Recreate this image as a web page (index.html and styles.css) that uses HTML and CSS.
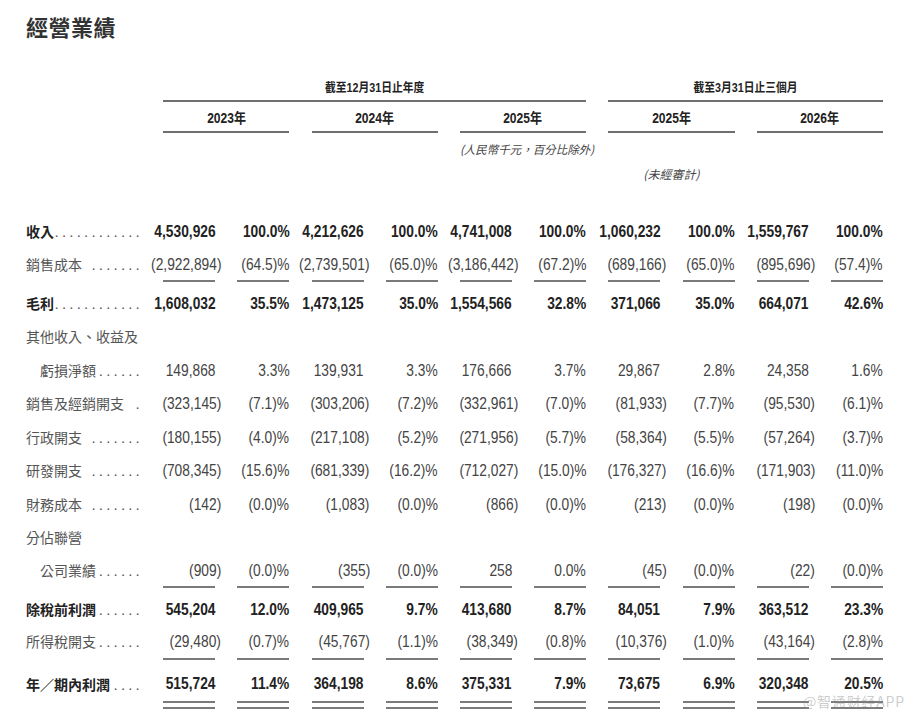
FILE: index.html
```html
<!DOCTYPE html>
<html lang="zh-Hant">
<head>
<meta charset="utf-8">
<title>經營業績</title>
<link rel="stylesheet" href="styles.css">
</head>
<body>
<div class="page">
  <h1 class="title">經營業績</h1>

  <div class="head">
    <div class="row hrow-a">
      <div class="lab"></div>
      <div class="h span6"><span class="hn">截至12月31日止年度</span></div>
      <div class="h span4"><span class="hn">截至3月31日止三個月</span></div>
    </div>
    <div class="row hrow-b">
      <div class="lab"></div>
      <div class="h span2"><span class="hn">2023年</span></div>
      <div class="h span2"><span class="hn">2024年</span></div>
      <div class="h span2"><span class="hn">2025年</span></div>
      <div class="h span2"><span class="hn">2025年</span></div>
      <div class="h span2"><span class="hn">2026年</span></div>
    </div>
    <div class="row hrow-c">
      <div class="lab"></div>
      <div class="note g3">(人民幣千元，百分比除外)</div>
    </div>
    <div class="row hrow-d">
      <div class="lab"></div>
      <div class="note g4">(未經審計)</div>
    </div>
  </div>

  <div class="body">
    <div class="row b">
      <div class="lab"><span class="t">收入</span><span class="dots"></span></div>
      <div class="v"><span class="n">4,530,926</span></div><div class="v"><span class="n">100.0%</span></div>
      <div class="v"><span class="n">4,212,626</span></div><div class="v"><span class="n">100.0%</span></div>
      <div class="v"><span class="n">4,741,008</span></div><div class="v"><span class="n">100.0%</span></div>
      <div class="v"><span class="n">1,060,232</span></div><div class="v"><span class="n">100.0%</span></div>
      <div class="v"><span class="n">1,559,767</span></div><div class="v"><span class="n">100.0%</span></div>
    </div>
    <div class="row ul">
      <div class="lab"><span class="t">銷售成本</span><span class="dots sp"></span></div>
      <div class="v"><span class="n">(2,922,894<span class="hang">)</span></span></div><div class="v"><span class="n">(64.5)%</span></div>
      <div class="v"><span class="n">(2,739,501<span class="hang">)</span></span></div><div class="v"><span class="n">(65.0)%</span></div>
      <div class="v"><span class="n">(3,186,442<span class="hang">)</span></span></div><div class="v"><span class="n">(67.2)%</span></div>
      <div class="v"><span class="n">(689,166<span class="hang">)</span></span></div><div class="v"><span class="n">(65.0)%</span></div>
      <div class="v"><span class="n">(895,696<span class="hang">)</span></span></div><div class="v"><span class="n">(57.4)%</span></div>
    </div>
    <div class="row b">
      <div class="lab"><span class="t">毛利</span><span class="dots"></span></div>
      <div class="v"><span class="n">1,608,032</span></div><div class="v"><span class="n">35.5%</span></div>
      <div class="v"><span class="n">1,473,125</span></div><div class="v"><span class="n">35.0%</span></div>
      <div class="v"><span class="n">1,554,566</span></div><div class="v"><span class="n">32.8%</span></div>
      <div class="v"><span class="n">371,066</span></div><div class="v"><span class="n">35.0%</span></div>
      <div class="v"><span class="n">664,071</span></div><div class="v"><span class="n">42.6%</span></div>
    </div>
    <div class="row">
      <div class="lab"><span class="t">其他收入、收益及</span></div>
    </div>
    <div class="row">
      <div class="lab ind"><span class="t">虧損淨額</span><span class="dots"></span></div>
      <div class="v"><span class="n">149,868</span></div><div class="v"><span class="n">3.3%</span></div>
      <div class="v"><span class="n">139,931</span></div><div class="v"><span class="n">3.3%</span></div>
      <div class="v"><span class="n">176,666</span></div><div class="v"><span class="n">3.7%</span></div>
      <div class="v"><span class="n">29,867</span></div><div class="v"><span class="n">2.8%</span></div>
      <div class="v"><span class="n">24,358</span></div><div class="v"><span class="n">1.6%</span></div>
    </div>
    <div class="row">
      <div class="lab"><span class="t">銷售及經銷開支</span><span class="dots sp"></span></div>
      <div class="v"><span class="n">(323,145<span class="hang">)</span></span></div><div class="v"><span class="n">(7.1)%</span></div>
      <div class="v"><span class="n">(303,206<span class="hang">)</span></span></div><div class="v"><span class="n">(7.2)%</span></div>
      <div class="v"><span class="n">(332,961<span class="hang">)</span></span></div><div class="v"><span class="n">(7.0)%</span></div>
      <div class="v"><span class="n">(81,933<span class="hang">)</span></span></div><div class="v"><span class="n">(7.7)%</span></div>
      <div class="v"><span class="n">(95,530<span class="hang">)</span></span></div><div class="v"><span class="n">(6.1)%</span></div>
    </div>
    <div class="row">
      <div class="lab"><span class="t">行政開支</span><span class="dots sp"></span></div>
      <div class="v"><span class="n">(180,155<span class="hang">)</span></span></div><div class="v"><span class="n">(4.0)%</span></div>
      <div class="v"><span class="n">(217,108<span class="hang">)</span></span></div><div class="v"><span class="n">(5.2)%</span></div>
      <div class="v"><span class="n">(271,956<span class="hang">)</span></span></div><div class="v"><span class="n">(5.7)%</span></div>
      <div class="v"><span class="n">(58,364<span class="hang">)</span></span></div><div class="v"><span class="n">(5.5)%</span></div>
      <div class="v"><span class="n">(57,264<span class="hang">)</span></span></div><div class="v"><span class="n">(3.7)%</span></div>
    </div>
    <div class="row">
      <div class="lab"><span class="t">研發開支</span><span class="dots sp"></span></div>
      <div class="v"><span class="n">(708,345<span class="hang">)</span></span></div><div class="v"><span class="n">(15.6)%</span></div>
      <div class="v"><span class="n">(681,339<span class="hang">)</span></span></div><div class="v"><span class="n">(16.2)%</span></div>
      <div class="v"><span class="n">(712,027<span class="hang">)</span></span></div><div class="v"><span class="n">(15.0)%</span></div>
      <div class="v"><span class="n">(176,327<span class="hang">)</span></span></div><div class="v"><span class="n">(16.6)%</span></div>
      <div class="v"><span class="n">(171,903<span class="hang">)</span></span></div><div class="v"><span class="n">(11.0)%</span></div>
    </div>
    <div class="row">
      <div class="lab"><span class="t">財務成本</span><span class="dots sp"></span></div>
      <div class="v"><span class="n">(142<span class="hang">)</span></span></div><div class="v"><span class="n">(0.0)%</span></div>
      <div class="v"><span class="n">(1,083<span class="hang">)</span></span></div><div class="v"><span class="n">(0.0)%</span></div>
      <div class="v"><span class="n">(866<span class="hang">)</span></span></div><div class="v"><span class="n">(0.0)%</span></div>
      <div class="v"><span class="n">(213<span class="hang">)</span></span></div><div class="v"><span class="n">(0.0)%</span></div>
      <div class="v"><span class="n">(198<span class="hang">)</span></span></div><div class="v"><span class="n">(0.0)%</span></div>
    </div>
    <div class="row">
      <div class="lab"><span class="t">分佔聯營</span></div>
    </div>
    <div class="row ul">
      <div class="lab ind"><span class="t">公司業績</span><span class="dots"></span></div>
      <div class="v"><span class="n">(909<span class="hang">)</span></span></div><div class="v"><span class="n">(0.0)%</span></div>
      <div class="v"><span class="n">(355<span class="hang">)</span></span></div><div class="v"><span class="n">(0.0)%</span></div>
      <div class="v"><span class="n">258</span></div><div class="v"><span class="n">0.0%</span></div>
      <div class="v"><span class="n">(45<span class="hang">)</span></span></div><div class="v"><span class="n">(0.0)%</span></div>
      <div class="v"><span class="n">(22<span class="hang">)</span></span></div><div class="v"><span class="n">(0.0)%</span></div>
    </div>
    <div class="row b">
      <div class="lab"><span class="t">除稅前利潤</span><span class="dots"></span></div>
      <div class="v"><span class="n">545,204</span></div><div class="v"><span class="n">12.0%</span></div>
      <div class="v"><span class="n">409,965</span></div><div class="v"><span class="n">9.7%</span></div>
      <div class="v"><span class="n">413,680</span></div><div class="v"><span class="n">8.7%</span></div>
      <div class="v"><span class="n">84,051</span></div><div class="v"><span class="n">7.9%</span></div>
      <div class="v"><span class="n">363,512</span></div><div class="v"><span class="n">23.3%</span></div>
    </div>
    <div class="row ul">
      <div class="lab"><span class="t">所得稅開支</span><span class="dots"></span></div>
      <div class="v"><span class="n">(29,480<span class="hang">)</span></span></div><div class="v"><span class="n">(0.7)%</span></div>
      <div class="v"><span class="n">(45,767<span class="hang">)</span></span></div><div class="v"><span class="n">(1.1)%</span></div>
      <div class="v"><span class="n">(38,349<span class="hang">)</span></span></div><div class="v"><span class="n">(0.8)%</span></div>
      <div class="v"><span class="n">(10,376<span class="hang">)</span></span></div><div class="v"><span class="n">(1.0)%</span></div>
      <div class="v"><span class="n">(43,164<span class="hang">)</span></span></div><div class="v"><span class="n">(2.8)%</span></div>
    </div>
    <div class="row b dbl">
      <div class="lab"><span class="t">年／期內利潤</span><span class="dots"></span></div>
      <div class="v"><span class="n">515,724</span></div><div class="v"><span class="n">11.4%</span></div>
      <div class="v"><span class="n">364,198</span></div><div class="v"><span class="n">8.6%</span></div>
      <div class="v"><span class="n">375,331</span></div><div class="v"><span class="n">7.9%</span></div>
      <div class="v"><span class="n">73,675</span></div><div class="v"><span class="n">6.9%</span></div>
      <div class="v"><span class="n">320,348</span></div><div class="v"><span class="n">20.5%</span></div>
    </div>
  </div>

  <div class="watermark">@智通财经APP</div>
</div>
</body>
</html>
```

FILE: styles.css
```css
html, body {
  margin: 0;
  padding: 0;
  background: #ffffff;
}

.page {
  position: relative;
  width: 917px;
  height: 720px;
  overflow: hidden;
  font-family: "Liberation Sans", "Noto Sans CJK TC", sans-serif;
  color: #444;
}

.title {
  margin: 0;
  padding: 13px 0 0 26px;
  font-family: "Noto Sans CJK TC", sans-serif;
  font-size: 22px;
  line-height: 26px;
  font-weight: 700;
  letter-spacing: 0.5px;
  color: #333;
}

.row {
  display: grid;
  grid-template-columns: 115px repeat(10, 52px);
  column-gap: 22.2px;
  padding-left: 26px;
  line-height: 33.5px;
}

/* header */
.head {
  margin-top: 38px;
}

.h {
  text-align: center;
  font-family: "Liberation Sans", "Noto Sans CJK TC", sans-serif;
  font-weight: 700;
  color: #222;
  white-space: nowrap;
}
.hn {
  display: inline-block;
  transform: scaleX(0.86);
  transform-origin: center;
}

.span6 { grid-column: span 6; }
.span4 { grid-column: span 4; }
.span2 { grid-column: span 2; }

.hrow-a {
  line-height: 23px;
  font-size: 12.5px;
}
.hrow-a .h {
  border-bottom: 2px solid #6f6f6f;
}

.hrow-b {
  line-height: 25px;
  font-size: 14px;
}
.hrow-b .h {
  padding-top: 4px;
  border-bottom: 2px solid #6f6f6f;
}

.note {
  font-family: "Noto Sans CJK TC", sans-serif;
  font-style: italic;
  color: #444;
  white-space: nowrap;
}

.hrow-c {
  line-height: 32px;
  font-size: 11.5px;
}
.note.g3 {
  grid-column: 6 / span 2;
  text-align: right;
  margin-right: -3px;
}

.hrow-d {
  line-height: 18px;
  font-size: 12px;
}
.note.g4 {
  grid-column: 8 / span 2;
  text-align: center;
}

/* body */
.body {
  margin-top: 32px;
}

.lab {
  display: flex;
  align-items: baseline;
  font-family: "Noto Sans CJK TC", sans-serif;
  font-size: 14px;
  color: #555;
  white-space: nowrap;
  min-width: 0;
}
.lab.ind {
  padding-left: 14px;
}
.lab .t {
  flex: none;
}
.lab .dots {
  flex: 1;
  overflow: hidden;
  direction: rtl;
  margin-right: -2px;
  font-family: "Liberation Sans", sans-serif;
  font-size: 15px;
  font-weight: 400;
  letter-spacing: 3.2px;
  color: #555;
}
.lab .dots.sp {
  margin-left: 8px;
}
.lab .dots::after {
  content: "......................";
}

.v {
  display: flex;
  justify-content: flex-end;
  font-size: 17px;
  white-space: nowrap;
  color: #444;
}
.v .n {
  flex: none;
  display: inline-block;
  transform: scaleX(0.81);
  transform-origin: right center;
}
.hang {
  margin-right: -0.45em;
}

.row.b .v,
.row.b .lab .t {
  font-weight: 700;
  color: #222;
}

.row.ul {
  line-height: 31.5px;
  padding-bottom: 4.5px;
}
.row.ul .v {
  border-bottom: 2px solid #7a7a7a;
}

.row.dbl {
  line-height: 34px;
  padding-top: 3px;
}
.row.dbl .v {
  border-bottom: 2px solid #7a7a7a;
  box-shadow: 0 4px 0 #ffffff, 0 6px 0 #7a7a7a;
}

.watermark {
  position: absolute;
  left: 803px;
  top: 692px;
  font-family: "Noto Sans CJK SC", "Liberation Sans", sans-serif;
  font-size: 14px;
  line-height: 18px;
  letter-spacing: 0.8px;
  color: rgba(140, 140, 140, 0.45);
  white-space: nowrap;
}
```
